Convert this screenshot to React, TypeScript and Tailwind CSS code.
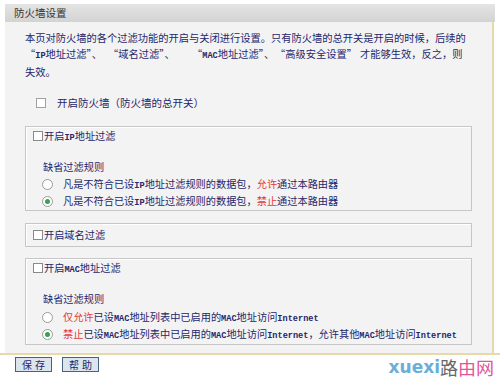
import React from "react";

const L = ({ children }: { children: React.ReactNode }) => (
  <span className="font-['Liberation_Mono',monospace] text-[8.6px] font-bold">{children}</span>
);

const Check = ({ cls = "" }: { cls?: string }) => (
  <span className={`inline-block w-[10px] h-[10px] border border-[#8a8a8a] bg-white shrink-0 ${cls}`} />
);

const Radio = ({ checked = false }: { checked?: boolean }) => (
  <span className="w-[11px] h-[11px] rounded-full border border-[#9a9a9a] bg-white flex items-center justify-center shrink-0">
    {checked && <span className="w-[5px] h-[5px] rounded-full bg-[#3c9f4c]" />}
  </span>
);

export default function App() {
  return (
    <div className="relative w-[500px] h-[379px] overflow-hidden bg-white text-[#26266a] font-['Noto_Sans_CJK_SC',sans-serif]">
      <div className="pt-[4px]">
        <div className="mx-[5px] h-[18px] bg-gradient-to-b from-[#e4e4e4] to-[#d3d3d3] flex items-center pl-[9px] text-[10.5px] text-[#333333]">
          防火墙设置
        </div>
        <div className="ml-[5px] mr-[6px] h-[331px] bg-[#f3f3f3] border-r-2 border-[#e8d9aa] pl-[20px] pt-[8px]">
          <div className="text-[10.25px] leading-[16px] whitespace-nowrap">
            <div>本页对防火墙的各个过滤功能的开启与关闭进行设置。只有防火墙的总开关是开启的时候，后续的</div>
            <div className="flex">
              <span className="inline-block w-[83px]">“<L>IP</L>地址过滤”、</span>
              <span className="inline-block w-[84px]">“域名过滤”、</span>
              <span className="inline-block w-[83px]">“<L>MAC</L>地址过滤”、</span>
              <span className="inline-block w-[85px]">“高级安全设置”</span>
              <span>才能够生效，反之，则</span>
            </div>
            <div>失效。</div>
          </div>
          <div className="mt-[15px] h-[16px] flex items-center pl-[11px] text-[10.5px]">
            <Check cls="border-[#a0a0a0]" />
            <span className="ml-[11px]">开启防火墙（防火墙的总开关）</span>
          </div>

          <div className="mt-[15px] w-[447px] border border-[#c6c6c6] shadow-[inset_1px_1px_0_#ffffff] pt-[1px] pl-[7px] text-[10.2px]">
            <div className="h-[16px] flex items-center">
              <Check />
              <span className="ml-[1px]">开启<L>IP</L>地址过滤</span>
            </div>
            <div className="mt-[15px] h-[16px] flex items-center pl-[10px]">缺省过滤规则</div>
            <div className="mt-[1px] h-[17px] flex items-center pl-[9px]">
              <Radio />
              <span className="ml-[10px]">
                凡是不符合已设<L>IP</L>地址过滤规则的数据包，<span className="text-[#e23a3a]">允许</span>通过本路由器
              </span>
            </div>
            <div className="h-[17px] flex items-center pl-[9px]">
              <Radio checked />
              <span className="ml-[10px]">
                凡是不符合已设<L>IP</L>地址过滤规则的数据包，<span className="text-[#e23a3a]">禁止</span>通过本路由器
              </span>
            </div>
          </div>

          <div className="mt-[12px] w-[447px] h-[24px] border border-[#c6c6c6] shadow-[inset_1px_1px_0_#ffffff] pl-[7px] flex items-center text-[10.2px]">
            <Check />
            <span className="ml-[1px]">开启域名过滤</span>
          </div>

          <div className="mt-[11px] w-[447px] border border-[#c6c6c6] shadow-[inset_1px_1px_0_#ffffff] pt-[1px] pb-[1px] pl-[7px] text-[10.2px]">
            <div className="h-[16px] flex items-center">
              <Check />
              <span className="ml-[1px]">开启<L>MAC</L>地址过滤</span>
            </div>
            <div className="mt-[15px] h-[16px] flex items-center pl-[10px]">缺省过滤规则</div>
            <div className="mt-[2px] h-[17px] flex items-center pl-[9px]">
              <Radio />
              <span className="ml-[10px]">
                <span className="text-[#e23a3a]">仅允许</span>已设<L>MAC</L>地址列表中已启用的<L>MAC</L>地址访问<L>Internet</L>
              </span>
            </div>
            <div className="h-[17px] flex items-center pl-[9px]">
              <Radio checked />
              <span className="ml-[10px] whitespace-nowrap">
                <span className="text-[#e23a3a]">禁止</span>已设<L>MAC</L>地址列表中已启用的<L>MAC</L>地址访问<L>Internet</L>，允许其他<L>MAC</L>地址访问<L>Internet</L>
              </span>
            </div>
          </div>
        </div>
        <div className="h-[2px] bg-[#e8d9aa]" />
        <div className="pt-[2px] pl-[15px] flex gap-[10px]">
          <button className="w-[37px] h-[15px] border border-[#45627e] bg-[#dbe5ee] text-[10px] leading-none text-[#26266a] flex items-center justify-center tracking-[3px] pl-[3px]">
            保存
          </button>
          <button className="w-[37px] h-[15px] border border-[#45627e] bg-[#dbe5ee] text-[10px] leading-none text-[#26266a] flex items-center justify-center tracking-[3px] pl-[3px]">
            帮助
          </button>
        </div>
      </div>
      <div className="absolute right-[6px] bottom-[3px] flex items-end leading-none">
        <span className="font-['DejaVu_Sans',sans-serif] font-bold text-[17px] text-[#6aaedb]">xuexi</span>
        <span className="text-[18px] text-[#666666]">路</span>
        <span className="text-[18px] text-[#e2559a]">由网</span>
      </div>
    </div>
  );
}
